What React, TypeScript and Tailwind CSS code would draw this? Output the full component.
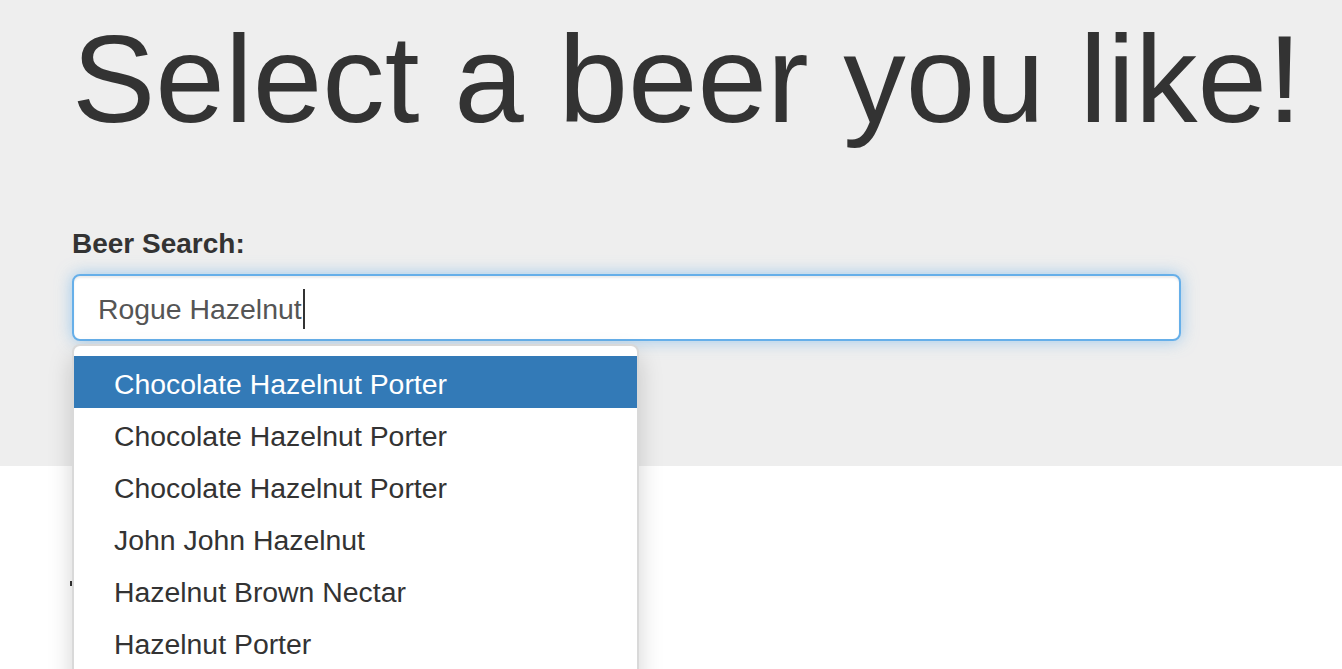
import React from "react";

const items = [
  "Chocolate Hazelnut Porter",
  "Chocolate Hazelnut Porter",
  "Chocolate Hazelnut Porter",
  "John John Hazelnut",
  "Hazelnut Brown Nectar",
  "Hazelnut Porter",
];

export default function App() {
  return (
    <div
      className="w-full h-[669px] overflow-hidden bg-white text-[#333]"
      style={{ fontFamily: '"Liberation Sans", Arial, Helvetica, sans-serif' }}
    >
      <div className="bg-[#eeeeee] h-[466px] pl-[72px] pt-[10px]">
        <h1 className="text-[125px] leading-[1.1] font-normal text-[#333] whitespace-nowrap">
          Select a beer you like!
        </h1>
        <div className="relative mt-[76px] w-[1109px]">
          <label className="block text-[28px] leading-[40px] font-bold mb-[10px]">
            Beer Search:
          </label>
          <div className="h-[67px] bg-white border-2 border-[#66afe9] rounded-[8px] pl-[24px] pt-[13px] shadow-[inset_0_2px_2px_rgba(0,0,0,0.075),0_0_16px_rgba(102,175,233,0.6)]">
            <div className="flex items-center text-[28.4px] leading-[40px] text-[#555]">
              <span>Rogue Hazelnut</span>
              <span className="inline-block w-[2px] h-[40px] bg-[#333] ml-[1px]" />
            </div>
          </div>
          <div className="absolute left-0 top-[120px] w-[567px] bg-white border-2 border-[rgba(0,0,0,0.15)] rounded-[8px] py-[10px] pb-[40px] shadow-[0_12px_24px_rgba(0,0,0,0.175)] z-10">
            {items.map((t, i) => (
              <div
                key={i}
                className={
                  i === 0
                    ? "bg-[#337ab7] text-white text-[28.4px] leading-[40px] pl-[40px] pt-[8px] pb-[4px] whitespace-nowrap"
                    : "text-[#333] text-[28.4px] leading-[40px] pl-[40px] pt-[8px] pb-[4px] whitespace-nowrap"
                }
              >
                {t}
              </div>
            ))}
          </div>
        </div>
      </div>
      <div className="pl-[70px] pt-[115px]">
        <div className="w-[2px] h-[5px] bg-[#333]" />
      </div>
    </div>
  );
}
